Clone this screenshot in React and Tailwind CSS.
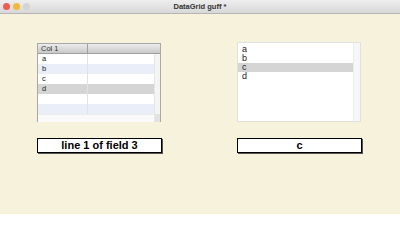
const rows = [
  { text: "a", bg: "bg-white" },
  { text: "b", bg: "bg-[#e9eef8]" },
  { text: "c", bg: "bg-white" },
  { text: "d", bg: "bg-[#d5d5d5]" },
  { text: "", bg: "bg-white" },
  { text: "", bg: "bg-[#e9eef8]" },
];

const items = ["a", "b", "c", "d"];

const Grid = () => (
  <div className="mt-[29px] w-[124px] h-[79px] border border-[#a8a8a8] bg-white flex flex-col">
    <div className="flex h-[10px] bg-gradient-to-b from-[#ececec] to-[#c9c9c9] border-b border-[#a0a0a0]">
      <div className="w-[50px] border-r border-[#a0a0a0] pl-[3px] text-[7.5px] leading-[9px] text-[#333]">Col 1</div>
      <div className="flex-1" />
    </div>
    <div className="flex flex-1">
      <div className="flex-1 flex flex-col">
        <div className="flex-1">
          {rows.map((r, i) => (
            <div key={i} className={`flex h-[10px] ${r.bg}`}>
              <div className="w-[50px] pl-[4px] text-[7.5px] leading-[10px] text-[#222] border-r border-[#e2e2e2]">{r.text}</div>
              <div className="flex-1" />
            </div>
          ))}
        </div>
        <div className="h-[8px] bg-[#fafafa] border-t border-[#ececec]" />
      </div>
      <div className="w-[6px] flex flex-col bg-[#f4f4f4] border-l border-[#e6e6e6]">
        <div className="flex-1" />
        <div className="h-[8px] bg-[#e2e2e2]" />
      </div>
    </div>
  </div>
);

const List = () => (
  <div className="mt-[28px] w-[124px] h-[80px] border border-[#e0e0e0] bg-white flex">
    <div className="flex-1 pt-[2px]">
      {items.map((t) => (
        <div key={t} className={`h-[9px] pl-[4px] flex items-center text-[9px] leading-none text-[#222] ${t === "c" ? "bg-[#d5d5d5]" : ""}`}>{t}</div>
      ))}
    </div>
    <div className="w-[7px] bg-[#f7f7f7] border-l border-[#ececec]" />
  </div>
);

const Field = ({ children }) => (
  <div className="mt-[16px] w-[125px] h-[15px] bg-white border border-black shadow-[1px_1px_0_#555] flex items-center justify-center text-[11px] font-bold text-black leading-none">
    {children}
  </div>
);

export default function App() {
  return (
    <div className="w-[400px] h-[214px] bg-[#f7f2dc] flex flex-col" style={{ fontFamily: '"Liberation Sans", Arial, sans-serif' }}>
      {/* Title bar */}
      <div className="relative h-[14px] bg-gradient-to-b from-[#eeeeee] to-[#d8d8d8] border-b border-[#b5b5b5] flex items-center">
        <div className="flex gap-[3px] pl-[3px]">
          <span className="w-[7px] h-[7px] rounded-full bg-[#ee5a52]" />
          <span className="w-[7px] h-[7px] rounded-full bg-[#f2b936]" />
          <span className="w-[7px] h-[7px] rounded-full bg-[#d4d4d4]" />
        </div>
        <div className="absolute inset-0 flex items-center justify-center text-[7.5px] font-bold text-[#333]">DataGrid guff *</div>
      </div>

      {/* Content */}
      <div className="flex gap-[75px] pl-[37px]">
        <div className="flex flex-col">
          <Grid />
          <Field>line 1 of field 3</Field>
        </div>
        <div className="flex flex-col">
          <List />
          <Field>c</Field>
        </div>
      </div>
    </div>
  );
}
